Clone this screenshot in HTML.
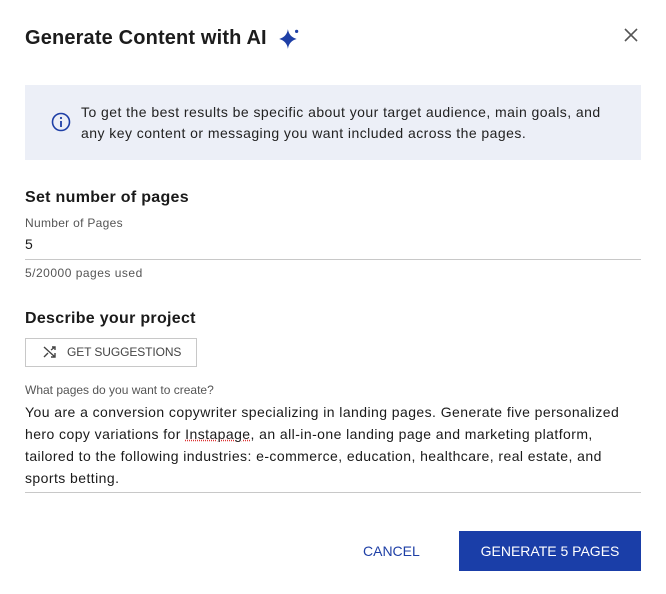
<!DOCTYPE html>
<html><head><meta charset="utf-8"><style>
body{margin:0;width:666px;height:594px;background:#fff;font-family:"Liberation Sans",sans-serif;color:#1a1a1a;position:relative;overflow:hidden}
.a{position:absolute;white-space:nowrap}
</style></head><body>
<div class="a" style="left:25px;top:27px;font-size:20px;font-weight:bold;letter-spacing:0.15px;color:#1c1c1c">Generate Content with AI</div>
<svg class="a" style="left:277px;top:27px" width="24" height="24" viewBox="0 0 22 22"><path d="M10 2 Q11 9 18 11 Q11 13 10 20 Q9 13 2 11 Q9 9 10 2Z" fill="#1e3fa6"/><circle cx="18" cy="4" r="1.5" fill="#1e3fa6"/></svg>
<svg class="a" style="left:624px;top:28px" width="14" height="14" viewBox="0 0 14 14"><path d="M1 1L13 13M13 1L1 13" stroke="#555" stroke-width="1.6"/></svg>
<div class="a" style="left:25px;top:85px;width:616px;height:75px;background:#eceff7"></div>
<svg class="a" style="left:51px;top:112px" width="20" height="20" viewBox="0 0 20 20"><circle cx="10" cy="10" r="8.5" fill="none" stroke="#1e3fa6" stroke-width="1.6"/><circle cx="10" cy="6" r="1.1" fill="#1e3fa6"/><path d="M10 9v6" stroke="#1e3fa6" stroke-width="1.8"/></svg>
<div class="a" style="left:81px;top:102px;font-size:14px;line-height:21px;color:#222;letter-spacing:0.45px">To get the best results be specific about your target audience, main goals, and<br>any key content or messaging you want included across the pages.</div>
<div class="a" style="left:25px;top:189px;font-size:16px;font-weight:bold;letter-spacing:0.3px">Set number of pages</div>
<div class="a" style="left:25px;top:216px;font-size:12px;color:#555;letter-spacing:0.3px">Number of Pages</div>
<div class="a" style="left:25px;top:236px;font-size:14px">5</div>
<div class="a" style="left:25px;top:259px;width:616px;height:1px;background:#c8c8c8"></div>
<div class="a" style="left:25px;top:266px;font-size:12px;color:#555;letter-spacing:0.5px">5/20000 pages used</div>
<div class="a" style="left:25px;top:310px;font-size:16px;font-weight:bold;letter-spacing:0.3px">Describe your project</div>
<div class="a" style="left:25px;top:338px;width:170px;height:27px;border:1px solid #c8c8c8"></div>
<svg class="a" style="left:43px;top:345px" width="14" height="14" viewBox="0 0 14 14" fill="none" stroke="#444" stroke-width="1.4"><path d="M1 2L12 12M8 12h4v-4M1 12L5 8M8 5L12 2M9 2h3v3"/></svg>
<div class="a" style="left:67px;top:345px;font-size:12px;color:#444;letter-spacing:-0.1px">GET SUGGESTIONS</div>
<div class="a" style="left:25px;top:383px;font-size:12px;color:#555;letter-spacing:0px">What pages do you want to create?</div>
<div class="a" style="left:25px;top:401px;font-size:14px;line-height:22px;color:#1a1a1a;letter-spacing:0.43px">You are a conversion copywriter specializing in landing pages. Generate five personalized<br>hero copy variations for <span style="text-decoration:underline dotted #d33">Instapage</span>, an all-in-one landing page and marketing platform,<br>tailored to the following industries: e-commerce, education, healthcare, real estate, and<br>sports betting.</div>
<div class="a" style="left:25px;top:492px;width:616px;height:1px;background:#c8c8c8"></div>
<div class="a" style="left:363px;top:543px;font-size:14px;color:#1e3fa6">CANCEL</div>
<div class="a" style="left:459px;top:531px;width:182px;height:40px;background:#1a3ea8;color:#fff;font-size:14px;line-height:40px;text-align:center">GENERATE 5 PAGES</div>
</body></html>
